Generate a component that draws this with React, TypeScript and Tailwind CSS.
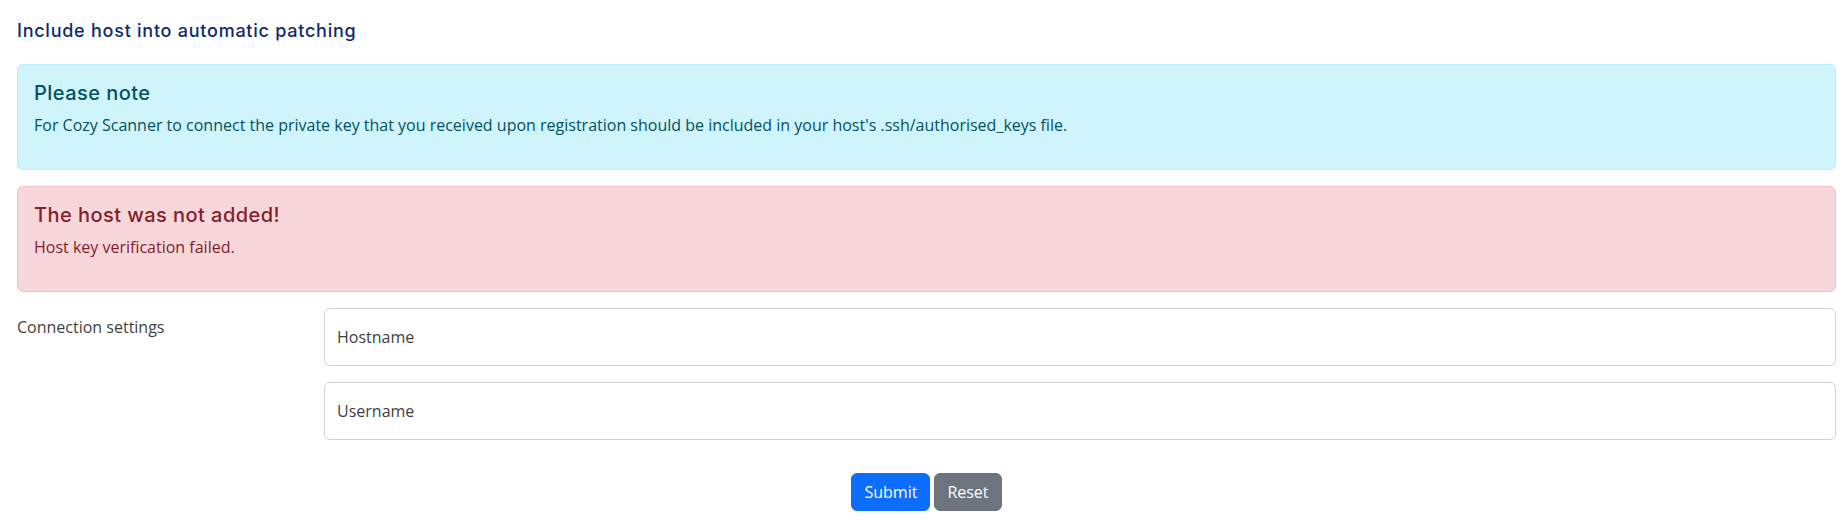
import React from 'react';

const heading = "font-['Inter','Noto_Sans',sans-serif]";
const body = "font-['Open_Sans','Noto_Sans',sans-serif]";

const Alert: React.FC<{ title: string; tone: 'info' | 'danger'; children: React.ReactNode }> = ({ title, tone, children }) => {
  const styles =
    tone === 'info'
      ? 'bg-[#cff4fc] border-[#b6effb] text-[#055160]'
      : 'bg-[#f8d7da] border-[#f5c2c7] text-[#842029]';
  return (
    <div className={`border rounded-md p-4 mb-4 ${styles}`}>
      <h5 className={`${heading} text-[20px] leading-[24px] tracking-[0.45px] font-medium mb-2`}>{title}</h5>
      <p className="text-base leading-6 mb-4">{children}</p>
    </div>
  );
};

const FloatingInput: React.FC<{ label: string; className?: string }> = ({ label, className }) => (
  <div className={`relative ${className ?? ''}`}>
    <input
      type="text"
      placeholder={label}
      className="w-full h-[58px] px-3 border border-[#ced4da] rounded-md bg-white text-base text-[#212529] placeholder:text-[#3d4043] outline-none"
    />
  </div>
);

export default function App() {
  return (
    <div className={`${body} bg-white text-[#212529] pl-[17px] pr-[7px] pt-[20px] min-h-[520px]`}>
      <h4 className={`${heading} text-[18px] leading-[22px] tracking-[0.75px] font-medium text-[#0f2a6e] mb-[22px]`}>
        Include host into automatic patching
      </h4>

      <Alert title="Please note" tone="info">
        For Cozy Scanner to connect the private key that you received upon registration should be included in your
        host's .ssh/authorised_keys file.
      </Alert>

      <Alert title="The host was not added!" tone="danger">
        Host key verification failed.
      </Alert>

      <form onSubmit={(e) => e.preventDefault()}>
        <div className="flex">
          <label className="w-[307px] shrink-0 pt-[7px] text-base leading-6 text-[#3f3f3f]">Connection settings</label>
          <div className="flex-1">
            <FloatingInput label="Hostname" className="mb-4" />
            <FloatingInput label="Username" />
          </div>
        </div>

        <div className="flex justify-center gap-1 mt-[33px]">
          <button type="submit" className="bg-[#0d6efd] border border-[#0d6efd] text-white text-base leading-6 px-3 py-[6px] rounded-md">
            Submit
          </button>
          <button type="reset" className="bg-[#6c757d] border border-[#6c757d] text-white text-base leading-6 px-3 py-[6px] rounded-md">
            Reset
          </button>
        </div>
      </form>
    </div>
  );
}
